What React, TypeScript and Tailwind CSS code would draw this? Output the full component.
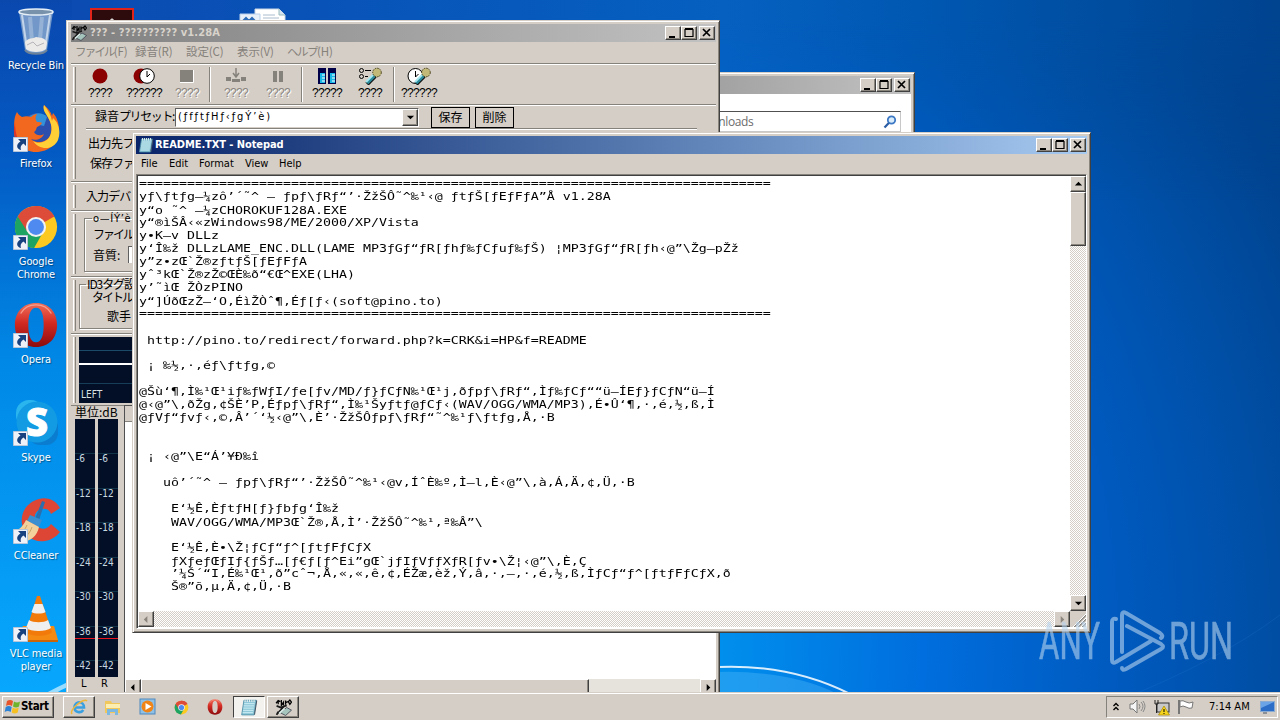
import React from 'react';

const raised =
    'border border-t-white border-l-white border-r-[#404040] border-b-[#404040] bg-[#d5cec6] shadow-[inset_-1px_-1px_0_#8a857d]';
const ui = "font-['DejaVu_Sans_Condensed','DejaVu_Sans',sans-serif]";
const jp = "font-['Noto_Sans_CJK_JP',sans-serif]";

const readme: string[] = [
    '='.repeat(79),
    "yƒ\\ƒtƒg–¼zô’´˜^ – ƒpƒ\\ƒRƒ“’·ŽžŠÔ˜^‰¹‹@ ƒtƒŠ[ƒEƒFƒA”Å v1.28A",
    "y“o ˜^ –¼zCHOROKUF128A.EXE",
    "y“®ìŠÂ‹«zWindows98/ME/2000/XP/Vista",
    "y•K—v DLLz",
    "y‘Î‰ž DLLzLAME_ENC.DLL(LAME MP3ƒGƒ“ƒR[ƒhƒ‰ƒCƒuƒ‰ƒŠ) ¦MP3ƒGƒ“ƒR[ƒh‹@”\\Žg—pŽž",
    "y”z•zŒ`Ž®zƒtƒŠ[ƒEƒFƒA",
    "yˆ³kŒ`Ž®zŽ©ŒÈ‰ð“€Œ^EXE(LHA)",
    "y’˜ìŒ ŽÒzPINO",
    "y“]ÚðŒzŽ–‘O‚ÉìŽÒˆ¶‚Éƒ[ƒ‹(soft@pino.to)",
    '='.repeat(79),
    "",
    " http://pino.to/redirect/forward.php?k=CRK&i=HP&f=README",
    "",
    " ¡ ‰½‚·‚éƒ\\ƒtƒg‚©",
    "",
    "@Šù‘¶‚Ì‰¹Œ¹iƒ‰ƒWƒI/ƒe[ƒv/MD/ƒ}ƒCƒN‰¹Œ¹j‚ðƒpƒ\\ƒRƒ“‚Ìƒ‰ƒCƒ““ü—ÍEƒ}ƒCƒN“ü—Í",
    "@‹@”\\‚ðŽg‚¢ŠÈ’P‚Éƒpƒ\\ƒRƒ“‚Ì‰¹Šyƒtƒ@ƒCƒ‹(WAV/OGG/WMA/MP3)‚É•Û‘¶‚·‚é‚½‚ß‚Ì",
    "@ƒVƒ“ƒvƒ‹‚©‚Â’´‘½‹@”\\‚È’·ŽžŠÔƒpƒ\\ƒRƒ“˜^‰¹ƒ\\ƒtƒg‚Å‚·B",
    "",
    "",
    " ¡ ‹@”\\E“Á’¥Ð‰î",
    "",
    "   uô’´˜^ – ƒpƒ\\ƒRƒ“’·ŽžŠÔ˜^‰¹‹@v‚ÍˆÈ‰º‚Ì—l‚È‹@”\\‚à‚Á‚Ä‚¢‚Ü‚·B",
    "",
    "    E‘½Ê‚ÈƒtƒH[ƒ}ƒbƒg‘Î‰ž",
    "    WAV/OGG/WMA/MP3Œ`Ž®‚Å‚Ì’·ŽžŠÔ˜^‰¹‚ª‰Â”\\",
    "",
    "    E‘½Ê‚È•\\Ž¦ƒCƒ“ƒ^[ƒtƒFƒCƒX",
    "    ƒXƒeƒŒƒIƒ{ƒŠƒ…[ƒ€ƒ[ƒ^Ei”gŒ`jƒIƒVƒƒXƒR[ƒv•\\Ž¦‹@”\\‚È‚Ç",
    "    ’¼Š´“I‚É‰¹Œ¹‚ð”cˆ¬‚Å‚«‚«‚ê‚¢‚ÉŽæ‚èž‚Ý‚â‚·‚–‚·‚é‚½‚ß‚ÌƒCƒ“ƒ^[ƒtƒFƒCƒX‚ð",
    "    Š®”õ‚µ‚Ä‚¢‚Ü‚·B",
];

const Arrow: React.FC<{ d: 'up' | 'down' | 'left' | 'right'; muted?: boolean }> = ({ d, muted }) => {
    const pts = { up: '1,6 5,2 9,6', down: '1,3 5,7 9,3', left: '6,1 2,5 6,9', right: '3,1 7,5 3,9' };
    return (
        <svg width="9" height="9" viewBox="0 0 10 10" className="shrink-0">
            <polygon points={pts[d]} fill={muted ? '#8a857d' : '#000'} />
        </svg>
    );
};

const WindowButtons = () => (
    <div className="flex h-[14px] shrink-0">
        <div className={`h-[14px] w-4 ${raised}`}>
            <svg width="14" height="12"><rect x="3" y="9" width="6" height="2" /></svg>
        </div>
        <div className={`mr-[2px] h-[14px] w-4 ${raised}`}>
            <svg width="14" height="12"><path d="M3 2.5h8v7H3zM3 1.5h8" fill="none" stroke="#000" strokeWidth="1.2" /></svg>
        </div>
        <div className={`h-[14px] w-4 ${raised}`}>
            <svg width="14" height="12"><path d="M3 2l7 7M10 2l-7 7" fill="none" stroke="#000" strokeWidth="1.7" /></svg>
        </div>
    </div>
);

const NotepadIcon: React.FC<{ size: number }> = ({ size }) => (
    <svg width={size} height={size} viewBox="0 0 16 16" className="shrink-0">
        <path d="M3.500 2h11L12.500 15H1.500z" fill="#8fc8d8" stroke="#4f91a8" strokeWidth=".8" />
        <path d="M3.700 5h9.200M3.300 7h9.200M3 9h9.200M2.700 11h9.200M2.400 13h9" stroke="#d3f2f7" strokeWidth=".8" />
        <path d="M4.500 1v2.500M6.500 1v2.500M8.500 1v2.500M10.500 1v2.500M12.500 1v2.500" stroke="#e8eef0" strokeWidth=".9" />
        <path d="M14.500 2l.8.5-2 12.500-.8-.5z" fill="#456" />
    </svg>
);

const RecorderIcon: React.FC<{ size: number }> = ({ size }) => (
    <svg width={size} height={size} viewBox="0 0 16 16" className="shrink-0">
        <path d="M5 13l6-5 4.500 2.500L10 15.500z" fill="#a4c4bc" stroke="#334" strokeWidth=".7" />
        <path d="M1.500 6.500l4 1.500 5.500-2M8 7.500l-6 6.500M3 12l-1.500 3" stroke="#1a1a1a" strokeWidth="1.600" fill="none" />
        <path d="M1 4l2-2.500 2 1M3 1.500V5M6 1v5l2-3v3M10 1.500v4M10 3.500l2-1M12.500 2.500l1.500-1.500 1.500 2-1.500 2z" stroke="#000" strokeWidth="1.200" fill="none" />
        <path d="M4 13.500l5-4.500" stroke="#d9efea" strokeWidth="1.600" />
    </svg>
);

const ChromeIcon: React.FC<{ size: number }> = ({ size }) => (
    <svg width={size} height={size} viewBox="0 0 48 48">
        <circle cx="24" cy="24" r="22" fill="#fbc91f" />
        <path d="M24 24L4.950 13A22 22 0 0 1 43.050 13z" fill="#dd4b39" />
        <path d="M24 2A22 22 0 0 1 43.050 13H24z" fill="#dd4b39" />
        <path d="M4.950 13A22 22 0 0 0 22 46l9-16-7-6z" fill="#1da462" />
        <path d="M4.950 13L15 29 24 13z" fill="#dd4b39" />
        <circle cx="24" cy="24" r="10.500" fill="#f2f2f2" />
        <circle cx="24" cy="24" r="8.300" fill="#4f8af0" />
    </svg>
);

const OperaIcon: React.FC<{ size: number }> = ({ size }) => (
    <svg width={size} height={size} viewBox="0 0 48 48">
        <defs>
            <linearGradient id="op" x1="0" y1="0" x2="0" y2="1">
                <stop offset="0" stopColor="#f0705c" />
                <stop offset=".45" stopColor="#d22a22" />
                <stop offset="1" stopColor="#8c0b0d" />
            </linearGradient>
        </defs>
        <path fillRule="evenodd" d="M24 1C10 1 2 11 2 24s8 23 22 23 22-10 22-23S38 1 24 1zm0 5c6 0 8 8 8 18s-2 18-8 18-8-8-8-18 2-18 8-18z" fill="url(#op)" />
        <path d="M8 12C12 5 18 3 24 3s12 2 16 9" stroke="#ffb9a8" strokeWidth="1.500" fill="none" opacity=".7" />
    </svg>
);

const RecycleBin = () => (
    <svg width="48" height="48" viewBox="0 0 48 48">
        <path d="M7 5l6 38c3 5 19 5 22 0l6-38z" fill="#a9bfd4" fillOpacity=".66" />
        <path d="M10 8l5 34M38 8l-5 34" stroke="#eef5fb" strokeWidth="2" opacity=".65" />
        <path d="M18 10l2 24M30 10l-2 22" stroke="#e6eef6" strokeWidth="4" opacity=".3" />
        <path d="M13 35c4-5 8-3 11-5 4 1 8 0 11 5l-1 7c-4 4-16 4-20 0z" fill="#eceae8" />
        <path d="M15 38l6-3 4 4 7-3" stroke="#b3b3b8" fill="none" />
        <path d="M13 43c3 5 19 5 22 0" stroke="#6e8297" strokeWidth="2" fill="none" />
        <ellipse cx="24" cy="5" rx="17" ry="3" fill="#7892ab" stroke="#e6eff7" strokeWidth="1.500" />
    </svg>
);

const FirefoxIcon = () => (
    <svg width="48" height="48" viewBox="0 0 48 48">
        <circle cx="25" cy="24" r="16" fill="#2c4fae" />
        <path d="M17 12c5-5 14-5 18 0l-3 9-9-2z" fill="#3291d8" />
        <path d="M5 7c1 2 3 4 5 5 3-1 6-1 9 0 2-2 4-3 6-3-2 3-2 6 0 8 2 0 4 0 5 1-1 2-3 3-5 4-1 2-1 4-3 5 2 4 7 4 10 2-2 5-8 7-13 5 6 6 18 3 20-6 2-8-2-14-5-19-2-3-3-6-2-9 4 3 7 7 8 11l1-3c4 4 6 11 6 17 0 13-10 22-23 22S2 38 2 26C2 18 2 12 5 7z" fill="#f2681f" />
        <path d="M32 0c-1 3 0 6 2 9 3 5 7 11 5 19-2 9-12 12-18 8 6 9 20 10 25-1 3-8 1-17-5-22l-1 3c-1-6-4-11-8-16z" fill="#ffcf38" />
        <path d="M3 17c0 13 3 22 14 28C6 43 1 33 2 23z" fill="#d9342b" />
    </svg>
);

const SkypeIcon = () => (
    <svg width="48" height="48" viewBox="0 0 48 48" className="overflow-visible">
        <rect x="4" y="1" width="28" height="28" rx="13" fill="#2bb5ef" />
        <rect x="16" y="16" width="30" height="30" rx="12" fill="#0b7dd0" />
        <circle cx="25" cy="23" r="20.500" fill="#129be3" />
        <text x="25" y="37" textAnchor="middle" fontSize="38" fontWeight="800" fill="#fff" stroke="#fff" strokeWidth="1" fontFamily="Open Sans, sans-serif">S</text>
    </svg>
);

const CCleanerIcon = () => (
    <svg width="48" height="48" viewBox="0 0 48 48">
        <path d="M48 11C43 2 34 0 27 2 15 5 8 16 10 27c2 12 12 19 23 17 6-1 11-4 15-9l-9-8c-4 7-14 6-16-2-2-9 4-14 10-13 3 0 5 2 6 5z" fill="#dd4635" />
        <path d="M30 4l3 1-6 18-4-1z" fill="#2b6fae" />
        <path d="M18 18l12 5-3 7-12-6z" fill="#3b8fd0" />
        <path d="M14 23l13 7c-2 9-8 14-17 15C6 42 3 38 1 34c6 0 10-5 13-11z" fill="#f3d19c" />
        <path d="M15 28c-2 5-5 8-10 9M20 30c-2 6-5 9-10 12" stroke="#cda464" fill="none" />
    </svg>
);

const VlcIcon = () => (
    <svg width="48" height="48" viewBox="0 0 48 48">
        <path d="M11 31h31l4 14H3z" fill="#f58a12" />
        <path d="M3 45h43v2H3z" fill="#c96508" />
        <path d="M25 1h3l12 36c-4 5-22 5-26 0z" fill="#f27a0a" />
        <path d="M22.500 9h8l3 8c-3 2-11 2-14 0zM17 25c4 3 15 3 19 0l3 8c-5 4-20 4-25 0z" fill="#efeff0" />
    </svg>
);

const desktopIcons = [
    { label: 'Recycle Bin', icon: <RecycleBin />, shortcut: false },
    { label: 'Firefox', icon: <FirefoxIcon />, shortcut: true },
    { label: 'Google Chrome', icon: <ChromeIcon size={46} />, shortcut: true },
    { label: 'Opera', icon: <OperaIcon size={46} />, shortcut: true },
    { label: 'Skype', icon: <SkypeIcon />, shortcut: true },
    { label: 'CCleaner', icon: <CCleanerIcon />, shortcut: true },
    { label: 'VLC media player', icon: <VlcIcon />, shortcut: true },
];

const Desktop = () => (
    <div className="flex w-[72px] flex-col">
        {desktopIcons.map((item) => (
            <div key={item.label} className="flex h-[98px] flex-col items-center pt-[7px]">
                <div className="relative flex h-12 w-12 items-center justify-center">
                    {item.icon}
                    {item.shortcut && (
                        <svg width="15" height="15" viewBox="0 0 15 15" className="absolute bottom-[1px] left-[1px]">
                            <path d="M.5.5h14v14H.5z" fill="#eef2f8" stroke="#b7c6d8" />
                            <path d="M5 2h8v7l-2.500-2.500C8 8 7 10 8 13 3 12 3 7 7.500 4.500z" fill="#17417f" />
                        </svg>
                    )}
                </div>
                <div className={`mt-1 w-[68px] text-center text-[11px] leading-[13px] tracking-[-0.100px] text-white [text-shadow:1px_1px_1px_#0006] ${ui}`}>{item.label}</div>
            </div>
        ))}
    </div>
);

const Wallpaper = () => (
    <svg width="1280" height="720" className="absolute left-0 top-0">
        <defs>
            <radialGradient id="glow" gradientUnits="userSpaceOnUse" cx="330" cy="640" r="1060">
                <stop offset="0" stopColor="#08b0ff" />
                <stop offset=".35" stopColor="#0092ee" />
                <stop offset=".56" stopColor="#006ede" />
                <stop offset=".74" stopColor="#005abf" />
                <stop offset=".88" stopColor="#004fa6" />
                <stop offset="1" stopColor="#00438f" />
            </radialGradient>
            <linearGradient id="left" x1="0" y1="0" x2="0" y2="1">
                <stop offset="0" stopColor="#0a48ae" />
                <stop offset=".2" stopColor="#0458c2" />
                <stop offset=".5" stopColor="#0088e6" />
                <stop offset="1" stopColor="#08aaff" />
            </linearGradient>
            <linearGradient id="top" x1="0" y1="0" x2="1" y2="0">
                <stop offset="0" stopColor="#0b4bb2" />
                <stop offset=".54" stopColor="#0560c0" />
                <stop offset=".7" stopColor="#0058b2" />
                <stop offset="1" stopColor="#00438f" />
            </linearGradient>
            <linearGradient id="topfade" x1="0" y1="0" x2="0" y2="1">
                <stop offset="0" stopColor="#fff" />
                <stop offset=".1" stopColor="#fff" />
                <stop offset="1" stopColor="#000" />
            </linearGradient>
            <mask id="topmask"><rect x="72" width="1208" height="200" fill="url(#topfade)" /></mask>
        </defs>
        <rect width="1280" height="720" fill="url(#glow)" />
        <rect width="72" height="720" fill="url(#left)" />
        <rect x="72" width="1208" height="200" fill="url(#top)" mask="url(#topmask)" />
        <path d="M44 694Q57 687 72 680v5Q60 690 51 696z" fill="#bdeaff" opacity=".8" />
        <path d="M718 667Q790 664 850 694" fill="none" stroke="#fff" strokeWidth="2" opacity=".85" />
        <path d="M718 672Q790 670 838 694H718z" fill="#58bdf8" opacity=".35" />
        <path d="M1120 700Q1220 660 1280 615" fill="none" stroke="#3b8ee0" strokeWidth="1" opacity=".15" />
    </svg>
);

const micIcon = (
    <>
        <path d="M9 17l8-8" stroke="#111" strokeWidth="4.500" />
        <path d="M9 16l8-8" stroke="#2a8c9c" strokeWidth="3.500" />
        <path d="M8 15l8-8" stroke="#a8e8f0" strokeWidth="1.800" />
        <circle cx="19" cy="5.500" r="4.300" fill="#c2b978" stroke="#443c18" strokeDasharray="1.500 1" />
    </>
);

const toolbarGroups = [
    {
        pad: '',
        items: [
            { w: 'w-[44px]', label: '????', icon: <svg width="20" height="18"><circle cx="10" cy="9" r="7.500" fill="#8b0000" /></svg>, off: false },
            {
                w: 'w-[44px]', label: '??????', off: false,
                icon: <svg width="24" height="18"><circle cx="9" cy="9" r="7.500" fill="#8b0000" /><circle cx="15" cy="9" r="7.300" fill="#fff" stroke="#000" /><path d="M15 10V4M15 10l3-3" stroke="#000" /></svg>,
            },
            { w: 'w-[42px]', label: '????', icon: <svg width="20" height="18"><rect x="3" y="3" width="13" height="12" fill="#85817b" /><path d="M3 15.500h13.500V3" stroke="#fff" fill="none" /></svg>, off: true },
        ],
    },
    {
        pad: 'px-[2px]',
        items: [
            { w: 'w-[44px]', label: '????', icon: <svg width="24" height="18"><path d="M2 10h5v4H2zM8 12h8v3H8zM17 10h5v4h-5z" fill="#85817b" /><path d="M12 1v9M9 6l3 4 3-4" stroke="#85817b" strokeWidth="1.500" fill="none" /></svg>, off: true },
            { w: 'w-[40px]', label: '????', icon: <svg width="20" height="18"><path d="M5 4h4v11H5zM11 4h4v11h-4z" fill="#85817b" /></svg>, off: true },
        ],
    },
    {
        pad: 'px-[1px]',
        items: [
            { w: 'w-[44px]', label: '?????', icon: <svg width="20" height="18"><path d="M1 1h8v16H1zM11 1h8v16h-8z" fill="#000048" /><path d="M3 6h5v10H3zM13 6h5v10h-5z" fill="#18b8e8" /><path d="M5 8h3M5 11h3M5 14h3M15 8h3M15 11h3M15 14h3" stroke="#fff" /></svg>, off: false },
            {
                w: 'w-[42px]', label: '????', off: false,
                icon: <svg width="24" height="18"><circle cx="3.500" cy="3.500" r="2" fill="none" stroke="#000" /><circle cx="3.500" cy="9.500" r="2" fill="none" stroke="#000" /><path d="M7 3.500h6M7 9.500h3" stroke="#000" />{micIcon}</svg>,
            },
        ],
    },
    {
        pad: 'pl-[1px]',
        items: [
            {
                w: 'w-[44px]', label: '??????', off: false,
                icon: <svg width="24" height="18"><circle cx="8.500" cy="9" r="7.500" fill="#fff" stroke="#000" /><path d="M8.500 10V4M8.500 10l3-3" stroke="#000" />{micIcon}</svg>,
            },
        ],
    },
];

const Meter = () => (
    <div className="relative h-[258px] w-5 shrink-0 overflow-hidden bg-[#020f26] pt-[34px]">
        {[6, 12, 18, 24, 30, 36, 42].map((db) => (
            <div key={db} className={`h-[34.5px] border-t border-[#123449] pl-[1px] text-[10px] leading-[9px] text-[#c8d8e0] ${ui}`}>-{db}</div>
        ))}
        <div className="absolute left-0 top-[219px] z-10 h-px w-full bg-[#e8141e]" />
    </div>
);

// etched horizontal divider between rebar rows
const Etch = () => <div className="h-[2px] w-full shrink-0 border-b border-t border-b-white border-t-[#85817b]" />;
const Grip = () => <div className="my-[2px] w-[3px] shrink-0 self-stretch border-l border-r border-l-white border-r-[#85817b]" />;

const Recorder = () => (
    <div className="absolute left-[66px] top-5 flex h-[680px] w-[654px] flex-col border border-l-[#d5cec6] border-t-[#d5cec6] border-b-[#404040] border-r-[#404040] bg-[#d5cec6] p-[3px] pl-1 shadow-[inset_1px_1px_0_#fff,inset_-1px_-1px_0_#8a857d]">
        <div className="flex h-[18px] shrink-0 items-center bg-linear-to-r from-[#808080] to-[#c2c2c2] pr-[1px]">
            <RecorderIcon size={16} />
            <span className={`ml-[3px] flex-1 whitespace-pre text-[11px] font-bold tracking-[0.100px] text-[#d8d3cb] ${ui}`}>??? - ?????????? v1.28A</span>
            <WindowButtons />
        </div>
        <div className={`flex h-[21px] shrink-0 items-center whitespace-nowrap pb-[1px] pl-[4px] text-[11.500px] text-[#85817b] ${jp}`}>
            <span className="w-[60px] tracking-[-1.800px]">ファイル<span className="tracking-[-0.100px]">(F)</span></span>
            <span className="w-[51px] tracking-[-0.100px]">録音(R)</span>
            <span className="w-[51px] tracking-[-0.100px]">設定(C)</span>
            <span className="w-[50px] tracking-[-0.100px]">表示(V)</span>
            <span className="tracking-[-1.500px]">ヘルプ<span className="tracking-[-0.100px]">(H)</span></span>
        </div>
        <Etch />
        <div className="flex h-[39px] shrink-0 pl-[2px]">
            <Grip />
            <div className="flex pl-[2px]">
                {toolbarGroups.map((g, i) => (
                    <div key={i} className="flex">
                        {i > 0 && <div className="mx-[1px] my-[2px] w-[2px] border-l border-r border-l-[#85817b] border-r-white" />}
                        <div className={`flex ${g.pad}`}>
                            {g.items.map((b, j) => (
                                <div key={j} className={`flex flex-col items-center pt-[2px] ${b.w}`}>
                                    {b.icon}
                                    <span className={`text-[12px] leading-[17px] font-['Liberation_Sans',sans-serif] tracking-[-0.670px] ${b.off ? 'text-[#8a857f] [text-shadow:1px_1px_0_#fff]' : 'text-black'}`}>{b.label}</span>
                                </div>
                            ))}
                        </div>
                    </div>
                ))}
            </div>
        </div>
        <Etch />
        <div className={`flex h-[75px] shrink-0 whitespace-nowrap pl-[2px] text-[12px] leading-[15px] ${jp}`}>
            <Grip />
            <div className="ml-[10px] flex w-[611px] flex-col">
                <div className="flex h-[23px] items-center border-b border-[#85817b] pl-[9px]">
                    <span className="w-[80px] pb-[3px] tracking-[-1.400px]"><span className="tracking-normal">録音</span>プリセット:</span>
                    <div className={`flex h-[19px] w-[244px] items-center border border-b-white border-l-[#606060] border-r-white border-t-[#606060] bg-white pl-[2px] text-[11px] ${ui}`}>
                        <span className="flex-1 pb-[2px] tracking-[1.900px]">(ƒfƒtƒHƒ‹ƒgÝ’è)</span>
                        <div className={`flex h-[17px] w-[16px] items-center justify-center ${raised}`}><Arrow d="down" /></div>
                    </div>
                    <div className="ml-[12px] flex h-[21px] w-[39px] items-center justify-center border border-black pb-[2px]">保存</div>
                    <div className="ml-[5px] flex h-[21px] w-[39px] items-center justify-center border border-black pb-[2px]">削除</div>
                </div>
                <div className="flex h-[26px] items-center border-t border-white pl-[2px] tracking-[-0.500px]">出力先フ</div>
                <div className="pl-[4px] tracking-[-1px]">保存ファ</div>
            </div>
        </div>
        <Etch />
        <div className={`flex h-[27px] shrink-0 pl-[2px] text-[12px] ${jp}`}>
            <Grip />
            <span className="flex items-center pb-[2px] pl-[10px] tracking-[-0.900px]">入力デバ</span>
        </div>
        <Etch />
        <div className={`flex h-[64px] shrink-0 pl-[2px] text-[12px] leading-[15px] ${jp}`}>
            <Grip />
            <fieldset className="mb-1 ml-[8px] w-[300px] border border-[#85817b] pl-[8px] shadow-[1px_1px_0_#fff,inset_1px_1px_0_#fff]">
                <legend className={`-ml-px px-[1px] text-[11px] leading-[13px] tracking-[0.700px] ${ui}`}>o—ÍÝ’è</legend>
                <div className="mt-[1px] tracking-[-2px]">ファイル</div>
                <div className="mt-[5px] flex items-center">
                    <span className="w-[35px]">音質:</span>
                    <div className="h-[17px] w-20 border-l border-t border-[#606060] bg-white" />
                </div>
            </fieldset>
        </div>
        <Etch />
        <div className={`flex h-[55px] shrink-0 pl-[2px] text-[12px] leading-[15px] ${jp}`}>
            <Grip />
            <fieldset className="mb-1 ml-[3px] w-[300px] border border-[#85817b] pl-[12px] shadow-[1px_1px_0_#fff,inset_1px_1px_0_#fff]">
                <legend className="-ml-[6px] h-[12px] px-[1px] leading-[11px] tracking-[-1.100px]">ID3タグ設</legend>
                <div className="leading-[14px] tracking-[-2px]">タイトル</div>
                <div className="mt-[4px] pl-[15px]">歌手</div>
            </fieldset>
        </div>
        <Etch />
        <div className="flex h-[70px] shrink-0 pl-[2px]">
            <Grip />
            <div className="mb-[2px] ml-[3px] mt-[2px] flex w-[550px] flex-col">
                <div className="h-[26px] bg-[#020f26] pt-[13px]"><div className="h-px bg-[#1b4a68]" /></div>
                <div className="h-[2px] bg-white" />
                <div className="flex flex-1 flex-col bg-[#020f26] pt-[18px]">
                    <div className="h-px bg-[#173e58]" />
                    <span className={`mt-[4px] pl-[2px] text-[10px] leading-[13px] text-[#d8e0e4] ${ui}`}>LEFT</span>
                </div>
            </div>
        </div>
        <div className="flex min-h-0 flex-1">
            <div className="w-[53px] shrink-0 border-t border-[#85817b] pl-1">
                <div className={`h-[13px] whitespace-nowrap text-[12px] leading-[11px] ${jp}`}>単位:dB</div>
                <div className="flex gap-[3px]"><Meter /><Meter /></div>
                <div className={`flex text-[11px] leading-[14px] ${ui}`}><span className="w-[22px] pl-[6px]">L</span><span className="pl-[4px]">R</span></div>
            </div>
            <div className="flex flex-1 flex-col border-l border-t border-[#505050] bg-white">
                <div className="h-[16px] border-b border-[#85817b] bg-[#d5cec6]" />
                <div className="h-[257px]" />
                <div className="flex h-[16px] bg-[#ece8e3]">
                    <div className={`flex w-4 items-center justify-center ${raised}`}><Arrow d="left" /></div>
                    <div className={`w-[448px] ${raised}`} />
                    <div className="flex-1 bg-[#e6e2dc]" />
                    <div className={`flex w-4 items-center justify-center ${raised}`}><Arrow d="right" /></div>
                </div>
            </div>
        </div>
    </div>
);

const Explorer = () => (
    <div className="absolute left-[500px] top-[72px] flex h-[500px] w-[415px] flex-col border border-b-[#404040] border-l-[#d5cec6] border-r-[#404040] border-t-[#d5cec6] bg-[#d5cec6] p-[3px] shadow-[inset_1px_1px_0_#fff,inset_-1px_-1px_0_#8a857d]">
        <div className="flex h-[18px] shrink-0 items-center justify-end bg-linear-to-r from-[#808080] to-[#c2c2c2] pr-[1px]">
            <WindowButtons />
        </div>
        <div className="flex-1 bg-white pr-[10px] pt-[17px]">
            <div className="flex h-[21px] items-center border border-[#c8c8c8] border-t-[#505050] pl-[151px] font-['Open_Sans',sans-serif] text-[12px] text-[#6d6d6d]">
                <span className="flex-1 tracking-[-0.400px]">Search Downloads</span>
                <svg width="14" height="14" className="mr-[3px]">
                    <circle cx="8.500" cy="5" r="3.700" fill="#d8ecfb" stroke="#3c78c4" strokeWidth="1.800" />
                    <path d="M5.800 8L1.500 12.500" stroke="#2b5da4" strokeWidth="2.200" />
                </svg>
            </div>
        </div>
    </div>
);

const checker = 'bg-[repeating-conic-gradient(#fff_0_25%,#d5cec6_0_50%)] bg-[length:2px_2px]';

const Notepad = () => (
    <div className="absolute left-[132px] top-[132px] flex h-[501px] w-[959px] flex-col border border-b-[#404040] border-l-[#d5cec6] border-r-[#404040] border-t-[#d5cec6] bg-[#d5cec6] p-[3px] shadow-[inset_1px_1px_0_#fff,inset_-1px_-1px_0_#8a857d]">
        <div className="flex h-[18px] shrink-0 items-center bg-linear-to-r from-[#0a246a] to-[#a6caf0] pl-[2px] pr-[1px]">
            <NotepadIcon size={16} />
            <span className={`ml-[1px] flex-1 whitespace-pre text-[11px] font-bold tracking-[-0.080px] text-white ${ui}`}>README.TXT - Notepad</span>
            <WindowButtons />
        </div>
        <div className={`flex h-[21px] shrink-0 items-center pl-[5px] text-[11px] ${ui}`}>
            <span className="w-7">File</span>
            <span className="w-[30px]">Edit</span>
            <span className="w-[46px]">Format</span>
            <span className="w-[34px]">View</span>
            <span>Help</span>
        </div>
        <div className="-mt-px flex min-h-0 flex-1 flex-col border border-b-white border-l-[#85817b] border-r-white border-t-[#85817b] bg-white">
            <div className="flex min-h-0 flex-1 border-l border-t border-[#404040]">
                <div className="min-w-0 flex-1 overflow-hidden pl-[1px] pt-[1px]">
                    <pre className="origin-top-left scale-y-[0.85] font-['DejaVu_Sans_Mono','Liberation_Mono',monospace] text-[13.290px] leading-[15.294px] text-black">
                        {readme.join('\n')}
                    </pre>
                </div>
                <div className={`flex w-4 shrink-0 flex-col ${checker}`}>
                    <div className={`flex h-4 items-center justify-center ${raised}`}><Arrow d="up" /></div>
                    <div className={`h-[54px] ${raised}`} />
                    <div className="flex-1" />
                    <div className={`flex h-4 items-center justify-center ${raised}`}><Arrow d="down" /></div>
                </div>
            </div>
            <div className="flex h-[17px] shrink-0 border-l border-[#404040] pb-px">
                <div className={`flex flex-1 justify-between ${checker}`}>
                    <div className={`flex w-4 items-center justify-center ${raised}`}><Arrow d="left" muted /></div>
                    <div className={`flex w-4 items-center justify-center ${raised}`}><Arrow d="right" muted /></div>
                </div>
                <div className="h-4 w-4 bg-[#d5cec6]">
                    <svg width="16" height="16"><path d="M4 16L16 4M8 16l8-8M12 16l4-4" stroke="#85817b" strokeWidth="1.500" /><path d="M3 16L16 3M7 16l9-9M11 16l5-5" stroke="#fff" /></svg>
                </div>
            </div>
        </div>
    </div>
);

const Watermark = () => (
    <svg width="200" height="70" className="absolute left-[1035px] top-[605px] overflow-visible opacity-60" fill="#b8d4ee">
        <text x="4" y="54" fontFamily="Roboto, sans-serif" fontSize="51" textLength="61" lengthAdjust="spacingAndGlyphs" stroke="#b8d4ee" strokeWidth=".6">ANY</text>
        <text x="134" y="54" fontFamily="Roboto, sans-serif" fontSize="51" textLength="64" lengthAdjust="spacingAndGlyphs" stroke="#b8d4ee" strokeWidth=".6">RUN</text>
        <g fill="none" stroke="#b8d4ee" strokeWidth="4" strokeLinejoin="round" strokeLinecap="round">
            <path d="M81 14q-4-1-4 3v38q0 4 4 2l35-21" />
            <path d="M87 47V10q0-4 4-2l34 20q4 3 1 5M92 21l34 18q4 3 0 5L91 64q-4 2-4-1" />
        </g>
    </svg>
);

const Taskbar = () => (
    <div className="absolute left-0 top-[692px] flex h-7 w-[1280px] items-center border-t border-[#d5cec6] bg-[#d5cec6] pl-[2px] pr-[2px] pt-[1px] shadow-[inset_0_1px_0_#fff]">
        <div className={`flex h-[22px] w-[52px] items-center pl-[1px] ${raised}`}>
            <svg width="17" height="16" viewBox="0 0 17 16" className="shrink-0">
                <path d="M3 2q3-2 6 0L8 7Q5 5 2 7z" fill="#e8552a" />
                <path d="M10 2.500q3 2 6 0l-1 5q-3 2-6 0z" fill="#6fb42c" />
                <path d="M1.700 8q3-2 6 0l-1 5q-3-2-6 0z" fill="#2d83d6" />
                <path d="M8.700 8.500q3 2 6 0l-1 5q-3 2-6 0z" fill="#f6c022" />
            </svg>
            <span className={`text-[11.500px] font-bold tracking-[-0.350px] ${ui}`}>Start</span>
        </div>
        <div className={`ml-[9px] flex h-[22px] w-8 items-center justify-center ${raised}`}>
            <svg width="18" height="18" viewBox="0 0 18 18">
                <path d="M4.500 9.500h9.500c0-7-9.500-7-9.500 0 0 5 6.500 6 8.800 2.500" fill="none" stroke="#3aa0e0" strokeWidth="2.600" />
                <path d="M2 16C-1 12 14-1 17 3" fill="none" stroke="#efb73a" strokeWidth="1.500" />
            </svg>
        </div>
        <div className="flex w-[138px] items-center justify-between pl-[9px] pr-[10px]">
            <svg width="17" height="18" viewBox="0 0 17 18">
                <path d="M1 3h6l1 2h8v10H1z" fill="#efc75a" />
                <path d="M2 6h14v4H2z" fill="#fbeeb0" />
                <path d="M3 17v-6h11v6h-3v-3H6v3z" fill="#7db8e0" />
            </svg>
            <svg width="17" height="18" viewBox="0 0 17 18">
                <rect x="1" y="1" width="15" height="15" fill="#8fc0e6" stroke="#4f89bd" />
                <circle cx="8.500" cy="8.500" r="6" fill="#f08416" />
                <path d="M6.500 5l6 3.500-6 3.500z" fill="#fff" />
            </svg>
            <ChromeIcon size={15} />
            <OperaIcon size={16} />
        </div>
        <div className="flex h-[22px] w-8 items-center justify-center border border-b-white border-l-[#404040] border-r-white border-t-[#404040] bg-[#f4f2ef]">
            <NotepadIcon size={18} />
        </div>
        <div className={`ml-[2px] flex h-[22px] w-8 items-center justify-center ${raised}`}>
            <RecorderIcon size={17} />
        </div>
        <div className="flex-1" />
        <div className="flex h-[22px] w-[172px] items-center border border-b-white border-l-[#85817b] border-r-white border-t-[#85817b] pl-[5px]">
            <svg width="8" height="12"><path d="M1.500 5L4 2.500 6.500 5M1.500 9L4 6.500 6.500 9" fill="none" stroke="#000" strokeWidth="1.400" /></svg>
            <svg width="17" height="16" className="ml-[9px]"><path d="M1 5h3l4-4v13l-4-4H1z" fill="#f5f5f5" stroke="#777" /><path d="M10 5q2 3 0 5M12 3q4 4 0 9M14 2q4 5 0 11" fill="none" stroke="#888" /></svg>
            <svg width="18" height="17" className="ml-[7px]"><rect x="4" y="4" width="12" height="9" fill="#c8c8c8" stroke="#333" /><path d="M2 1v4h3V1M3.500 5v9" stroke="#222" fill="none" /><path d="M11 7l5.500 9h-11z" fill="#f6d31c" stroke="#a98a00" strokeWidth=".7" /><path d="M11 10v3M11 14v1" stroke="#000" /></svg>
            <svg width="17" height="16" className="ml-[6px]"><path d="M2 1v14" stroke="#777" strokeWidth="2" /><path d="M3 2q3-1 6 1t7 0l-1 6q-3 1-6-1t-6 0z" fill="#fff" stroke="#777" /></svg>
            <span className={`ml-[15px] whitespace-nowrap text-[11px] ${ui}`}>7:14 AM</span>
            <svg width="15" height="13" className="ml-[10px] shrink-0"><rect x=".5" y=".5" width="14" height="10" fill="#2c6dc8" stroke="#8babd0" /><path d="M1 1h13L1 7z" fill="#6ba4e6" /><path d="M3 12h4" stroke="#456" /></svg>
        </div>
    </div>
);

export default function App() {
    return (
        <div className="relative h-[720px] w-[1280px] overflow-hidden bg-[#0060c8] leading-normal">
            <Wallpaper />
            <div className="relative"><Desktop /></div>
            <div className="absolute left-[90px] top-2 h-5 w-11 border-2 border-[#e2231a] bg-[#2d0a0c]">
                <svg width="40" height="16" className="block"><path d="M18.500 12q0-3 1.500-3t1.500 3" fill="none" stroke="#fff" strokeWidth="1.200" /></svg>
            </div>
            <svg width="48" height="16" className="absolute left-[239px] top-2">
                <path d="M16 1h24l6 6v9H16z" fill="#fff" stroke="#c8d6e4" />
                <path d="M40 1v6h6" fill="#d5e3ef" stroke="#9bb" />
                <path d="M1 6h20v10H1z" fill="#e8f0fa" stroke="#b8d0ea" />
                <path d="M4 13l3-3 3 3 3-3 3 3" stroke="#2d6cb8" strokeWidth="2" fill="none" />
                <path d="M24 7h12M24 10h16M24 13h16" stroke="#a9bccd" />
            </svg>
            <Explorer />
            <Recorder />
            <Notepad />
            <Watermark />
            <Taskbar />
        </div>
    );
}
